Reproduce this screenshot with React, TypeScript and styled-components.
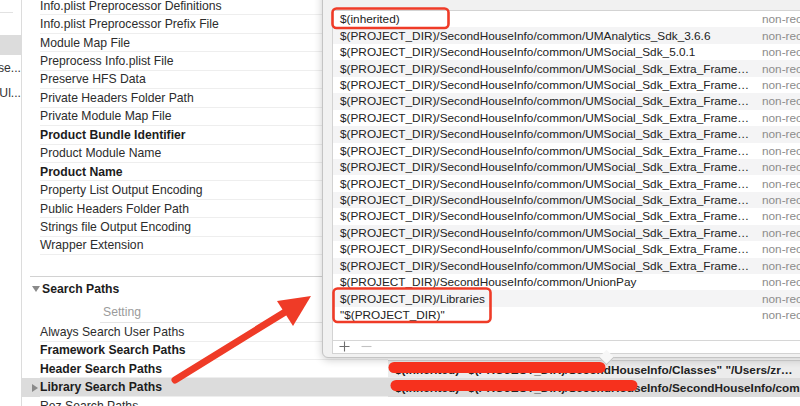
import React from "react";
import styled, { createGlobalStyle } from "styled-components";

const GlobalStyle = createGlobalStyle`
  html, body {
    margin: 0;
    padding: 0;
    background: #fff;
  }
`;

const Frame = styled.div`
  position: relative;
  width: 800px;
  height: 406px;
  overflow: hidden;
  display: flex;
  background: #fff;
  font-family: "Liberation Sans", Arial, sans-serif;
  font-size: 12.2px;
  color: #262626;
`;

const Sidebar = styled.div`
  width: 21px;
  flex-shrink: 0;
  border-right: 1px solid #dcdcdc;
  display: flex;
  flex-direction: column;
`;

const SidebarRule = styled.div`
  margin-top: 12px;
  width: 13px;
  height: 1px;
  background: #e2e2e2;
`;

const SidebarItem = styled.div<{ $selected?: boolean }>`
  height: ${p => (p.$selected ? "20px" : "25px")};
  margin-top: ${p => (p.$selected ? "22px" : "0")};
  background: ${p => (p.$selected ? "#dcdcdc" : "transparent")};
  display: flex;
  align-items: center;
  justify-content: flex-end;
  overflow: hidden;
  white-space: nowrap;
  color: #333;
`;

const Main = styled.div`
  flex: 1;
  min-width: 0;
  display: flex;
  flex-direction: column;
  margin-top: -3px;
`;

const Row = styled.div<{ $selected?: boolean }>`
  flex-shrink: 0;
  height: 18.45px;
  display: grid;
  grid-template-columns: 366px 1fr;
  background: ${p => (p.$selected ? "#dcdcdc" : "transparent")};
  position: relative;
`;

const Label = styled.div<{ $bold?: boolean }>`
  margin-left: 18px;
  display: flex;
  align-items: center;
  border-bottom: 1px solid #eeeeee;
  font-weight: ${p => (p.$bold ? 700 : 400)};
  color: ${p => (p.$bold ? "#1c1c1c" : "#2c2c2c")};
  white-space: nowrap;
`;

const Disclosure = styled.span<{ $open?: boolean }>`
  position: absolute;
  left: 10px;
  top: 50%;
  width: 0;
  height: 0;
  transform: translateY(-50%);
  border-style: solid;
  ${p =>
    p.$open
      ? "border-width: 6px 4px 0 4px; border-color: #8a8a8a transparent transparent transparent;"
      : "border-width: 4px 0 4px 6px; border-color: transparent transparent transparent #8a8a8a;"}
`;

const Value = styled.div<{ $editing?: boolean }>`
  padding-left: 7px;
  display: flex;
  align-items: center;
  white-space: nowrap;
  overflow: hidden;
  font-weight: 700;
  font-size: 11.8px;
  color: #222;
  background: ${p => (p.$editing ? "#ececec" : "transparent")};
  border-top: ${p => (p.$editing ? "1px solid #d6d6d6" : "none")};
`;

const GroupRule = styled.div`
  flex-shrink: 0;
  margin: 21px 0 0 8px;
  height: 1px;
  background: #d2d2d2;
`;

const GroupHeader = styled.div`
  flex-shrink: 0;
  position: relative;
  height: 24px;
  display: flex;
  align-items: center;
  padding-left: 20px;
  font-weight: 700;
  color: #1c1c1c;
`;

const ColumnHeader = styled.div`
  flex-shrink: 0;
  height: 21px;
  margin-left: 78px;
  display: flex;
  align-items: center;
  padding-left: 3px;
  color: #9b9b9b;
  border-bottom: 1px solid #e4e4e4;
`;

const Popup = styled.div`
  position: absolute;
  left: 322px;
  top: -14px;
  width: 500px;
  height: 372px;
  box-sizing: border-box;
  padding: 23px 0 3px 9px;
  background: #f1f1f1;
  border: 1px solid #c4c4c4;
  border-radius: 6px;
  box-shadow: 0 2px 9px rgba(0, 0, 0, 0.2);
  display: flex;
  flex-direction: column;
  font-size: 11.8px;
`;

const Pointer = styled.div`
  position: absolute;
  left: 278px;
  bottom: -6px;
  width: 10px;
  height: 10px;
  background: #f7f7f7;
  border-right: 1px solid #c4c4c4;
  border-bottom: 1px solid #c4c4c4;
  transform: rotate(45deg);
`;

const TableBox = styled.div`
  flex: 1;
  display: flex;
  flex-direction: column;
  background: #fff;
  border: 1px solid #d3d3d3;
  border-right: none;
`;

const Table = styled.div`
  display: flex;
  flex-direction: column;
  border-bottom: 1px solid #d6d6d6;
`;

const TableRow = styled.div<{ $striped?: boolean }>`
  height: 16.44px;
  display: grid;
  grid-template-columns: 429px 1fr;
  align-items: center;
  background: ${p => (p.$striped ? "#f4f4f5" : "#fff")};
  white-space: nowrap;
`;

const PathCell = styled.div`
  padding-left: 7px;
  color: #222;
  overflow: hidden;
`;

const KindCell = styled.div`
  color: #8c8c8c;
`;

const Toolbar = styled.div`
  flex: 1;
  display: flex;
  align-items: center;
  gap: 11px;
  padding-left: 6px;
`;

const ToolButton = styled.svg`
  display: block;
`;

const Overlay = styled.svg`
  position: absolute;
  left: 0;
  top: 0;
  pointer-events: none;
`;

const topSettings: [string, boolean][] = [
  ["Info.plist Preprocessor Definitions", false],
  ["Info.plist Preprocessor Prefix File", false],
  ["Module Map File", false],
  ["Preprocess Info.plist File", false],
  ["Preserve HFS Data", false],
  ["Private Headers Folder Path", false],
  ["Private Module Map File", false],
  ["Product Bundle Identifier", true],
  ["Product Module Name", false],
  ["Product Name", true],
  ["Property List Output Encoding", false],
  ["Public Headers Folder Path", false],
  ["Strings file Output Encoding", false],
  ["Wrapper Extension", false],
];

const base = "$(PROJECT_DIR)/SecondHouseInfo/common/";
const extra = base + "UMSocial_Sdk_Extra_Frame…";

const paths: string[] = [
  "$(inherited)",
  base + "UMAnalytics_Sdk_3.6.6",
  base + "UMSocial_Sdk_5.0.1",
  ...Array.from({ length: 13 }, () => extra),
  base + "UnionPay",
  "$(PROJECT_DIR)/Libraries",
  "\"$(PROJECT_DIR)\"",
];

const RED = "#ef3b27";

export default function App() {
  return (
    <>
      <GlobalStyle />
      <Frame>
        <Sidebar>
          <SidebarRule />
          <SidebarItem $selected />
          <SidebarItem>SecondHouse...</SidebarItem>
          <SidebarItem>SecondHouseInfoUl...</SidebarItem>
        </Sidebar>

        <Main>
          {topSettings.map(([name, bold]) => (
            <Row key={name}>
              <Label $bold={bold}>{name}</Label>
            </Row>
          ))}
          <GroupRule />
          <GroupHeader>
            <Disclosure $open />
            Search Paths
          </GroupHeader>
          <ColumnHeader>Setting</ColumnHeader>
          <Row>
            <Label>Always Search User Paths</Label>
            <Value />
          </Row>
          <Row>
            <Label $bold>Framework Search Paths</Label>
            <Value />
          </Row>
          <Row>
            <Label $bold>Header Search Paths</Label>
            <Value $editing>
              $(inherited) "$(PROJECT_DIR)/SecondHouseInfo/Classes" "/Users/zr…
            </Value>
          </Row>
          <Row $selected>
            <Disclosure />
            <Label $bold>Library Search Paths</Label>
            <Value>
              $(inherited) "$(PROJECT_DIR)/SecondHouseInfo/SecondHouseInfo/common…
            </Value>
          </Row>
          <Row>
            <Label>Rez Search Paths</Label>
            <Value />
          </Row>
        </Main>

        <Popup>
          <TableBox>
            <Table>
              {paths.map((p, i) => (
                <TableRow key={i} $striped={i % 2 === 1}>
                  <PathCell>{p}</PathCell>
                  <KindCell>non-recursive</KindCell>
                </TableRow>
              ))}
              <TableRow $striped={false} />
            </Table>
            <Toolbar>
              <ToolButton width="11" height="11" viewBox="0 0 11 11">
                <path d="M5.5 0.5v10M0.5 5.5h10" stroke="#6e6e6e" strokeWidth="1.1" />
              </ToolButton>
              <ToolButton width="11" height="11" viewBox="0 0 11 11">
                <path d="M0.5 5.5h10" stroke="#c2c2c2" strokeWidth="1.1" />
              </ToolButton>
            </Toolbar>
          </TableBox>
          <Pointer />
        </Popup>

        <Overlay width="800" height="406" viewBox="0 0 800 406">
          <rect x="332.5" y="8.5" width="116" height="19.5" rx="4" fill="none" stroke={RED} strokeWidth="2.6" />
          <rect x="333.5" y="288.5" width="157" height="33.5" rx="4" fill="none" stroke={RED} strokeWidth="2.6" />
          <line x1="175" y1="380" x2="290" y2="309" stroke={RED} strokeWidth="7" strokeLinecap="round" />
          <polygon points="311,296 277,301 293,326" fill={RED} />
          <line x1="394" y1="367.5" x2="600" y2="367.5" stroke="#f6311d" strokeWidth="11" strokeLinecap="round" />
          <line x1="396" y1="385.5" x2="632" y2="385.5" stroke="#f6311d" strokeWidth="11" strokeLinecap="round" />
        </Overlay>
      </Frame>
    </>
  );
}
